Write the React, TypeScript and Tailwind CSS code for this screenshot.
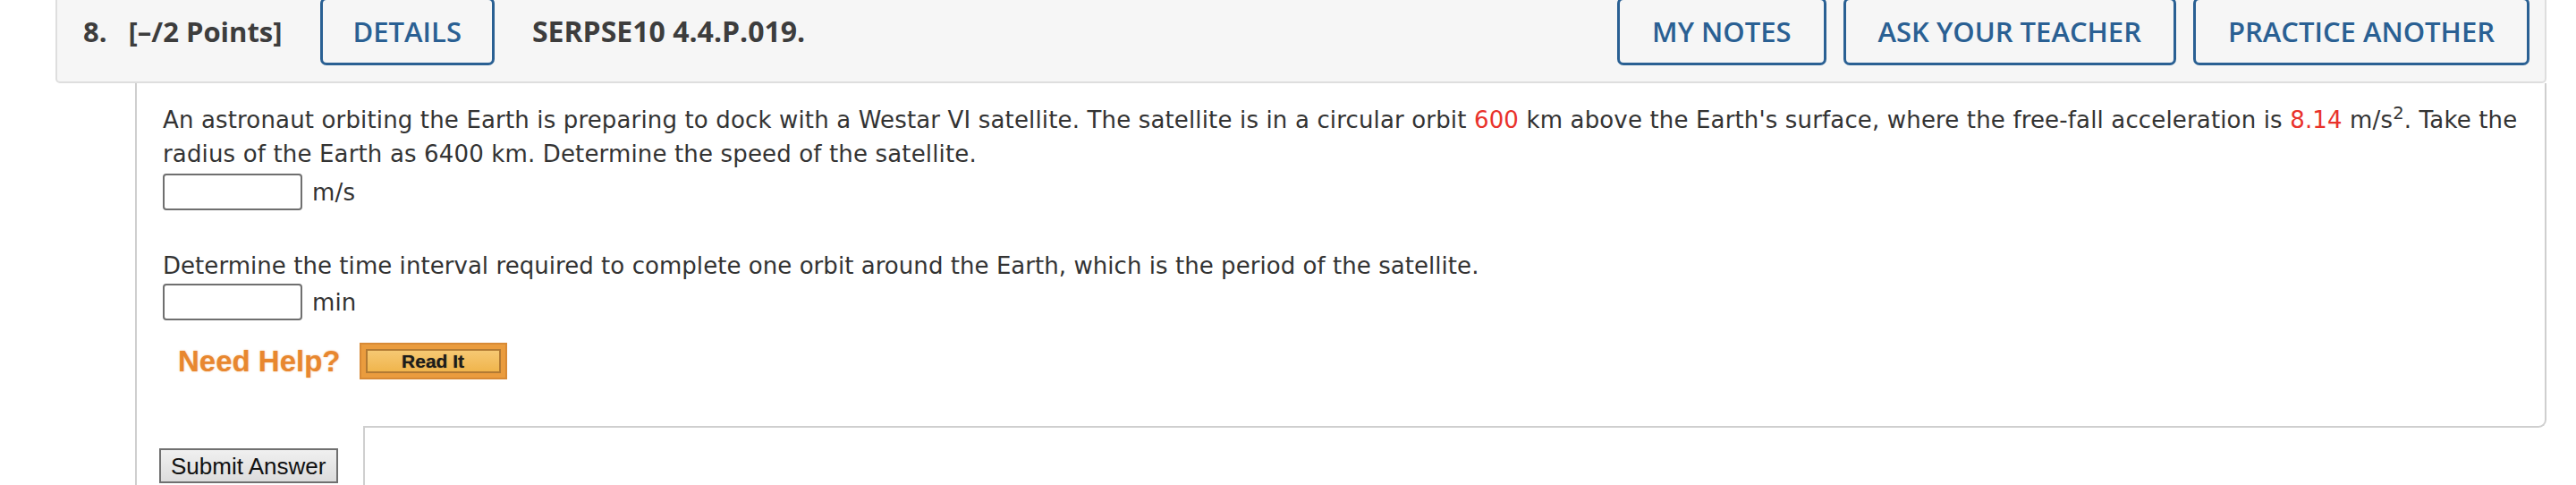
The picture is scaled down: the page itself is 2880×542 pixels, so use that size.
import React from "react";

const blueBtn =
  "h-[76px] flex items-center px-[36px] border-[3px] border-[#2a6093] rounded-[7px] text-[#2a6093] text-[31px] font-semibold leading-none";

export default function App() {
  return (
    <div className="w-[2880px] h-[542px] overflow-hidden bg-white" style={{ fontFamily: "'DejaVu Sans', Verdana, sans-serif" }}>
      {/* Header panel */}
      <div
        className="ml-[62px] mr-[33px] mt-[-20px] border-2 border-[#dedede] rounded-[5px] bg-[#f6f6f6] flex items-center pl-[29px] pr-[17px] pt-[15px] pb-[18px]"
        style={{ fontFamily: "'Open Sans', sans-serif" }}
      >
        <div className="flex items-center text-[31px] font-bold text-[#3d3d3d] leading-none">
          <span>8.</span>
          <span className="ml-[24px]">[–/2 Points]</span>
        </div>
        <div className={blueBtn.replace("px-[36px]", "px-[34px]") + " ml-[42px]"}>DETAILS</div>
        <div className="ml-[42px] text-[32px] font-bold text-[#3d3d3d] leading-none">SERPSE10 4.4.P.019.</div>
        <div className="ml-auto flex items-center gap-[19px]">
          <div className={blueBtn}>MY NOTES</div>
          <div className={blueBtn}>ASK YOUR TEACHER</div>
          <div className={blueBtn}>PRACTICE ANOTHER</div>
        </div>
      </div>

      {/* Body */}
      <div className="ml-[151px] mr-[33px] border-l-2 border-[#cfcfcf] h-[460px] flex flex-col">
        <div className="border-r-2 border-[#cfcfcf] pl-[29px] pt-[22px] pb-[44px] text-[26px] leading-[38px] tracking-[0.15px] text-[#333333]">
          <div className="whitespace-nowrap">
            An astronaut orbiting the Earth is preparing to dock with a Westar VI satellite. The satellite is in a circular orbit{" "}
            <span className="text-[#e9322b]">600</span> km above the Earth's surface, where the free-fall acceleration is{" "}
            <span className="text-[#e9322b]">8.14</span> m/s<sup>2</sup>. Take the
          </div>
          <div className="whitespace-nowrap">radius of the Earth as 6400 km. Determine the speed of the satellite.</div>
          <div className="flex items-center mt-[3px]">
            <div className="w-[156px] h-[41px] border-2 border-[#6f6f6f] rounded-[4px] bg-white" />
            <span className="ml-[11px]">m/s</span>
          </div>
          <div className="whitespace-nowrap mt-[43px] tracking-[0.05px]">
            Determine the time interval required to complete one orbit around the Earth, which is the period of the satellite.
          </div>
          <div className="flex items-center mt-[1px]">
            <div className="w-[156px] h-[41px] border-2 border-[#6f6f6f] rounded-[4px] bg-white" />
            <span className="ml-[11px]">min</span>
          </div>
          <div className="flex items-center mt-[25px] ml-[17px]">
            <span
              className="text-[33px] font-bold text-[#e8872f] leading-none tracking-normal"
              style={{ fontFamily: "'Liberation Sans', Arial, sans-serif", textShadow: "0 0 2px rgba(232,135,47,0.55)" }}
            >
              Need Help?
            </span>
            <div className="ml-[21px] w-[165px] h-[41px] border-2 border-[#d88a35] bg-[#ea9c3e] p-[5px]">
              <div className="w-full h-full border-2 border-[#b27a33] bg-gradient-to-b from-[#f6c872] to-[#f0b54c] flex items-center justify-center">
                <span
                  className="text-[21px] font-bold text-[#1c1c1c] leading-none tracking-normal"
                  style={{ fontFamily: "'Liberation Sans', Arial, sans-serif", textShadow: "0 0 1px rgba(0,0,0,0.5)" }}
                >
                  Read It
                </span>
              </div>
            </div>
          </div>
        </div>
        <div className="flex">
          <div className="w-[253px]" />
          <div className="flex-1 h-[10px] border-b-2 border-r-2 border-[#cfcfcf] rounded-br-[9px]" />
        </div>
        <div className="flex flex-1">
          <div className="w-[253px] pl-[25px] pt-[23px]">
            <div
              className="w-[200px] h-[39px] border-2 border-[#707070] bg-gradient-to-b from-[#f0f0f0] to-[#dcdcdc] flex items-center pl-[11px] text-[26px] text-[#111] leading-none"
              style={{ fontFamily: "'Liberation Sans', Arial, sans-serif" }}
            >
              Submit Answer
            </div>
          </div>
          <div className="flex-1 border-l-2 border-[#cfcfcf]" />
        </div>
      </div>
    </div>
  );
}
